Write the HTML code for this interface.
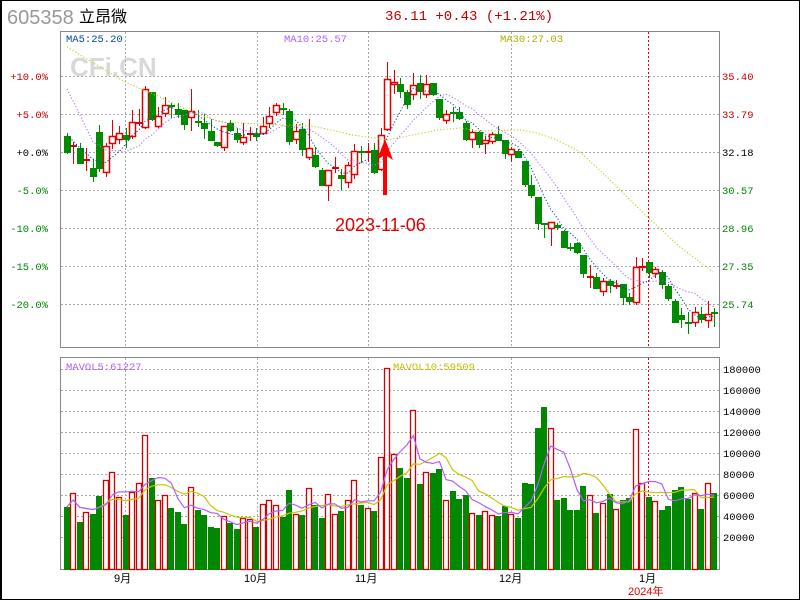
<!DOCTYPE html>
<html><head><meta charset="utf-8"><style>
html,body{margin:0;padding:0;background:#fff;}
#wrap{position:relative;width:798px;height:598px;border:1px solid #000;overflow:hidden;}
svg{position:absolute;left:-1px;top:-1px;}
text{font-family:"Liberation Mono","Noto Sans CJK SC",monospace;}
</style></head><body><div id="wrap">
<svg id="s" width="800" height="600" viewBox="0 0 800 600" xmlns="http://www.w3.org/2000/svg">
<rect x="0" y="0" width="800" height="600" fill="#fff"/>
<rect x="0" y="0" width="2" height="600" fill="#000"/>
<text x="7" y="24" font-family="Liberation Sans,sans-serif" font-size="20" fill="#999" style="font-family:'Liberation Sans',sans-serif">605358</text>
<text x="79" y="22" font-size="16" fill="#000" style="font-family:'Noto Sans CJK SC',sans-serif">立昂微</text>
<text x="385" y="20" font-size="14" fill="#c00000">36.11 +0.43 (+1.21%)</text>
<text x="70" y="76" font-size="26" font-weight="bold" fill="#d8d8d8" style="font-family:'Liberation Sans',sans-serif">CFi.CN</text>
<g id="grid"></g>
<rect x="60.5" y="31.5" width="659" height="316" fill="none" stroke="#888"/>
<rect x="60.5" y="357.5" width="659" height="212" fill="none" stroke="#888"/>
<text x="66" y="42" font-size="10.5" fill="#004b9b">MA5:25.20</text>
<text x="284" y="42" font-size="10.5" fill="#b060ff">MA10:25.57</text>
<text x="500" y="42" font-size="10.5" fill="#b0b000">MA30:27.03</text>
<text x="66" y="370" font-size="10.5" fill="#b060ff">MAVOL5:61227</text>
<text x="393" y="370" font-size="10.5" fill="#c0c000">MAVOL10:59509</text>
<g id="lab" font-size="10.5"></g>
<g id="c"></g>
<text x="335" y="231" font-size="18" fill="#e00000" style="font-family:'Liberation Sans',sans-serif">2023-11-06</text>
<polygon points="385,139 377,160 383,156 383,195 387,195 387,156 393,160" fill="#ff0000"/>
<text x="114" y="582" font-size="11" fill="#000" style="font-family:'Liberation Sans','Noto Sans CJK SC',sans-serif">9月</text>
<text x="244" y="582" font-size="11" fill="#000" style="font-family:'Liberation Sans','Noto Sans CJK SC',sans-serif">10月</text>
<text x="355" y="582" font-size="11" fill="#000" style="font-family:'Liberation Sans','Noto Sans CJK SC',sans-serif">11月</text>
<text x="499" y="582" font-size="11" fill="#000" style="font-family:'Liberation Sans','Noto Sans CJK SC',sans-serif">12月</text>
<text x="639" y="582" font-size="11" fill="#000" style="font-family:'Liberation Sans','Noto Sans CJK SC',sans-serif">1月</text>
<text x="628" y="595" font-size="11" fill="#e00000" style="font-family:'Liberation Sans','Noto Sans CJK SC',sans-serif">2024年</text>
</svg>
<script>
var NS="http://www.w3.org/2000/svg";
function el(p,t,a){var e=document.createElementNS(NS,t);for(var k in a)e.setAttribute(k,a[k]);p.appendChild(e);return e;}
var g=document.getElementById('grid'),L=document.getElementById('lab'),C=document.getElementById('c');
[76,114,152,190,228,266,304].forEach(function(y){el(g,'line',{x1:61,x2:719,y1:y+.5,y2:y+.5,stroke:'#aaa','stroke-dasharray':'2 2'});});
[369,390,411,432,453,474,495,516,537].forEach(function(y){el(g,'line',{x1:61,x2:719,y1:y+.5,y2:y+.5,stroke:'#aaa','stroke-dasharray':'2 2'});});
[125,257,368,511].forEach(function(x){el(g,'line',{x1:x+.5,x2:x+.5,y1:32,y2:347,stroke:'#aaa','stroke-dasharray':'2 2'});el(g,'line',{x1:x+.5,x2:x+.5,y1:358,y2:569,stroke:'#aaa','stroke-dasharray':'2 2'});});
el(g,'line',{x1:648.5,x2:648.5,y1:32,y2:347,stroke:'#e00','stroke-dasharray':'2 2'});
el(g,'line',{x1:648.5,x2:648.5,y1:358,y2:569,stroke:'#e00','stroke-dasharray':'2 2'});
var ll=[["+10.0%",'#d00000'],["+5.0%",'#d00000'],["+0.0%",'#000'],["-5.0%",'#008800'],["-10.0%",'#008800'],["-15.0%",'#008800'],["-20.0%",'#008800']];
var rl=[["35.40",'#d00000'],["33.79",'#d00000'],["32.18",'#000'],["30.57",'#008800'],["28.96",'#008800'],["27.35",'#008800'],["25.74",'#008800']];
[76,114,152,190,228,266,304].forEach(function(y,i){
 var t=el(L,'text',{x:48,y:y+4,'text-anchor':'end',fill:ll[i][1]});t.textContent=ll[i][0];
 t=el(L,'text',{x:722,y:y+4,fill:rl[i][1]});t.textContent=rl[i][0];});
["180000","160000","140000","120000","100000","80000","60000","40000","20000"].forEach(function(s,i){
 var t=el(L,'text',{x:723,y:373+i*21,fill:'#000'});t.textContent=s;});
var D=`g 136 152 133 153|rc 145 145 142 163|g 148 163 143 163|rc 159 159 148 170|g 168 176 159 181|g 132 168 125 171|r 146 172 143 176|r 136 143 120 148|r 133 139 126 143|g 135 139 128 147|r 122 136 110 138|rc 122 122 109 125|r 89 127 86 128|g 92 119 92 120|r 116 126 107 127|r 105 113 97 116|gc 105 105 103 117|g 109 114 103 117|g 110 124 110 129|r 111 117 89 130|gc 121 121 110 126|g 123 128 114 138|g 131 140 119 140|g 142 145 142 146|r 126 147 126 150|g 123 130 120 131|g 133 139 128 142|r 137 142 123 144|rc 133 133 127 140|g 133 136 128 140|r 126 133 117 134|r 116 123 107 127|r 105 112 103 115|gc 108 108 103 114|g 111 141 109 144|r 131 139 124 143|g 129 149 123 155|r 148 157 119 159|g 155 166 147 167|g 170 185 168 185|r 170 185 170 200|rc 167 167 157 172|g 175 178 169 189|r 165 182 162 187|r 151 174 144 178|gc 151 151 146 162|rc 151 151 143 161|g 150 172 143 173|r 135 169 128 170|r 79 129 62 130|r 82 84 70 93|g 84 91 78 97|g 92 104 90 108|r 85 94 73 99|g 83 91 75 98|r 84 94 75 97|g 83 94 83 95|g 99 117 99 119|r 114 120 110 123|gc 112 112 107 121|g 112 118 107 119|g 123 139 121 140|r 132 139 129 147|g 132 144 131 147|r 140 143 136 153|r 134 141 132 143|g 134 140 126 140|g 140 153 140 158|r 149 154 147 161|g 151 157 149 157|g 161 184 161 186|g 185 195 175 197|g 197 223 197 229|gc 223 223 223 237|r 222 228 222 245|g 225 227 223 229|g 231 247 230 247|gc 247 247 243 250|g 243 252 242 253|g 255 273 255 277|rc 276 276 265 287|g 277 288 273 288|r 281 291 278 295|g 281 285 279 292|rc 285 285 280 288|g 284 297 284 304|g 297 301 293 304|r 267 302 257 304|rc 266 266 258 270|g 262 272 262 277|r 269 273 267 277|g 272 284 270 288|g 286 298 284 300|g 301 322 299 322|g 315 319 308 327|gc 322 322 312 333|r 312 322 307 326|g 314 319 307 322|r 314 320 301 327|gc 312 312 308 326`.split('|').map(function(s){var a=s.split(' ');return [a[0],+a[1],+a[2],+a[3],+a[4]];});
var V=[507,493,522,512,514,496,480,472,497,515,492,483,435,478,500,495,508,512,524,487,510,515,527,528,516,523,529,518,519,527,504,500,505,517,490,514,515,488,505,518,494,514,511,500,480,505,508,511,457,368,454,468,478,410,484,472,473,469,500,491,499,495,513,515,511,515,516,506,514,518,483,484,428,407,428,500,498,510,510,486,495,513,503,494,509,500,498,429,483,497,501,510,506,490,487,499,493,509,483,493];
var VC="grgrggrrrgrrrgrrgggrggggrggrrgrrrggrgrggrrgrrgrgrr"+"rggrgrggrgggrgrrggrgggggrgggggrgrgrggrrgrgggggrgrg";
var RED='#e00000',GRN='#008c00';
function X(i){return 66.7+i*6.54;}
var close=[];
D.forEach(function(d,i){
 var x=Math.round(X(i)),t=d[0],col=t[0]=='r'?RED:GRN;
 close.push(t=='r'?d[1]:(t=='g'?d[2]:d[1]));
 el(C,'line',{x1:x+.5,x2:x+.5,y1:d[3],y2:d[4]+1,stroke:col});
 if(t=='rc'||t=='gc'){el(C,'rect',{x:x-3,y:d[1],width:7,height:2,fill:col});}
 else if(t=='r'){el(C,'rect',{x:x-2.5,y:d[1]+.5,width:6,height:Math.max(1,d[2]-d[1]),fill:'#fff',stroke:col,'stroke-width':1.5});}
 else{el(C,'rect',{x:x-3,y:d[1],width:7,height:Math.max(2,d[2]-d[1]+1),fill:col});}
});
V.forEach(function(v,i){
 var x=Math.round(X(i)),c=VC[i];
 if(c=='r')el(C,'rect',{x:x-2.5,y:v+.5,width:5,height:569-v,fill:'#fff',stroke:'#d00000','stroke-width':1.3});
 else el(C,'rect',{x:x-3,y:v,width:6,height:570-v,fill:'#008800'});
});
function ma(arr,n,i){var s=0,c=0;for(var k=Math.max(0,i-n+1);k<=i;k++){s+=arr[k];c++;}return s/c;}
function line(pts,col,dash,w){el(C,'polyline',{points:pts.map(function(p){return p[0].toFixed(1)+','+p[1].toFixed(1)}).join(' '),fill:'none',stroke:col,'stroke-width':w||1,'stroke-dasharray':dash||''});}
var m5=[],m10=[];
for(var i=0;i<100;i++){if(i>=4)m5.push([X(i),ma(close,5,i)]);if(i>=9)m10.push([X(i),ma(close,10,i)]);}
m5.unshift([67,135],[80,148]);
m10.unshift([67,89],[80,115],[93,142],[106,150]);
line(m10,'#b060ff','1.2 2');
line(m5,'#004b9b','1.2 2');
line([[67,47],[125,82],[160,97],[187,110],[220,122],[280,125],[313,126],[353,135],[387,140],[413,135],[437,130],[460,128],[480,131],[520,130],[537,133],[557,140],[580,152],[607,177],[633,203],[653,222],[680,247],[713,272]],'#c8c800','1.2 2');
var v5=[],v10=[];
for(var i=0;i<100;i++){v5.push([X(i),ma(V,5,i)]);v10.push([X(i),ma(V,10,i)]);}
line(v10,'#c8c800','',1.2);
line(v5,'#b060ff','',1.2);
</script>
</div></body></html>
